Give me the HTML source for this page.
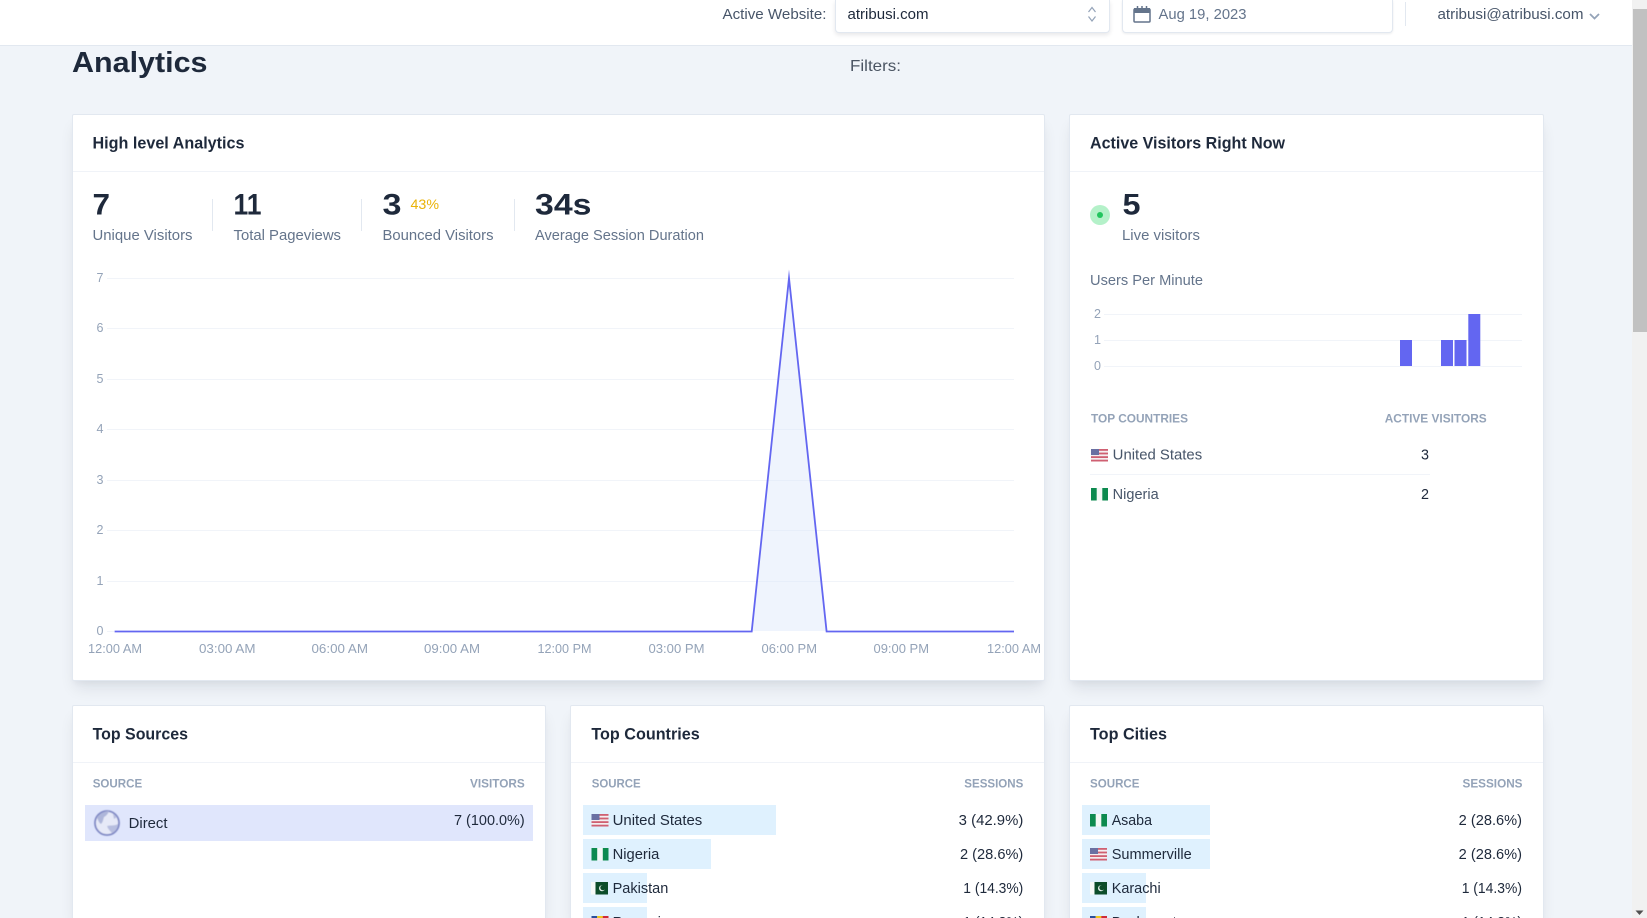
<!DOCTYPE html>
<html lang="en"><head><meta charset="utf-8"><title>Analytics</title>
<style>
html,body{margin:0;padding:0;width:1647px;height:918px;overflow:hidden;background:#f0f4f9}
body{position:relative;font-family:"Liberation Sans",sans-serif}
.hdr{position:absolute;left:0;top:0;width:1632px;height:45px;background:#fff;border-bottom:1px solid #e2e8f0}
.box{position:absolute;background:#fff;box-sizing:border-box}
.sel{top:0;height:32.5px;border:1px solid #e2e8f0;border-top:0;border-radius:0 0 4px 4px;box-shadow:0 2px 4px rgba(15,23,42,.1)}
.card{background:#fff;border:1px solid #e2e8f0;border-radius:2px;box-shadow:0 10px 15px -3px rgba(15,23,42,.09),0 4px 6px -2px rgba(15,23,42,.04)}
.open{border-bottom:0;border-radius:2px 2px 0 0}
.sb{position:absolute;left:1632px;top:0;width:15px;height:918px;background:#f1f1f1}
.th{position:absolute;left:1633px;top:9px;width:14px;height:323px;background:#c1c1c1}
svg{position:absolute;left:0;top:0}
text{font-family:"Liberation Sans",sans-serif}
.r{font-size:14.5px}
.b{font-size:16.5px;font-weight:700;fill:#1e293b}
.n{font-size:30px;font-weight:700;fill:#1e293b}
.g{fill:#64748b}
.h{font-size:12px;fill:#94a3b8;font-weight:700}
.t{font-size:12.5px;fill:#94a3b8}
.d{fill:#1e293b}
.m{fill:#475569}
.gl{stroke:#f1f4f9;stroke-width:1}
</style></head>
<body>
<div class="hdr"></div>
<div class="box sel" style="left:835px;width:274.5px"></div>
<div class="box sel" style="left:1122px;width:270.5px;box-shadow:0 1px 2px rgba(15,23,42,.08)"></div>
<div class="box card" style="left:72px;top:114px;width:973px;height:566.5px"></div>
<div class="box card" style="left:1069px;top:114px;width:474.5px;height:566.5px"></div>
<div class="box card open" style="left:72px;top:705px;width:473.5px;height:213px"></div>
<div class="box card open" style="left:570px;top:705px;width:474.5px;height:213px"></div>
<div class="box card open" style="left:1069px;top:705px;width:474.5px;height:213px"></div>
<div class="sb"></div><div class="th"></div>

<svg width="1647" height="918" viewBox="0 0 1647 918" xmlns="http://www.w3.org/2000/svg">
<defs>
<g id="us" filter="url(#fl)"><rect width="17" height="12.5" fill="#f4eef0"/><rect width="17" height="1.8" y="0" fill="#cf6072"/><rect width="17" height="1.8" y="3.6" fill="#cf6072"/><rect width="17" height="1.8" y="7.2" fill="#cf6072"/><rect width="17" height="1.8" y="10.7" fill="#cf6072"/><rect width="8" height="6" fill="#6a6fa2"/></g>
<g id="ng" filter="url(#fl)"><rect width="17" height="12.5" fill="#f4f8f5"/><rect width="5.7" height="12.5" fill="#0a8a50"/><rect x="11.3" width="5.7" height="12.5" fill="#0a8a50"/></g>
<g id="pk" filter="url(#fl)"><rect x="0" width="17" height="12.5" fill="#f8faf8"/><rect x="4.5" width="12.5" height="12.5" fill="#0b4d2a"/><circle cx="11" cy="6.2" r="3" fill="#e8f0ea"/><circle cx="11.9" cy="5.7" r="2.6" fill="#0b4d2a"/></g>
<g id="ro" filter="url(#fl)"><rect width="5.7" height="12.5" fill="#2a4f9c"/><rect x="5.7" width="5.7" height="12.5" fill="#f2c81e"/><rect x="11.3" width="5.7" height="12.5" fill="#ce2b37"/></g>
<filter id="fl" x="-10%" y="-10%" width="120%" height="120%"><feGaussianBlur stdDeviation=".3"/></filter>
<filter id="bl"><feGaussianBlur stdDeviation=".5"/></filter>
</defs>

<!-- top bar -->
<text x="722.5" y="19" class="r m" textLength="104" lengthAdjust="spacingAndGlyphs">Active Website:</text>
<text x="847.5" y="19" class="r d" textLength="81" lengthAdjust="spacingAndGlyphs">atribusi.com</text>
<path d="M1088.5 12l3.5-4.5 3.5 4.5M1088.5 16.5l3.5 4.5 3.5-4.5" fill="none" stroke="#94a3b8" stroke-width="1.2"/>
<path d="M1135 9h14a1 1 0 0 1 1 1v11a1 1 0 0 1-1 1h-14a1 1 0 0 1-1-1v-11a1 1 0 0 1 1-1z" fill="none" stroke="#64748b" stroke-width="1.5"/>
<path d="M1134 8h16v5h-16z" fill="#64748b"/>
<path d="M1137.5 6v3M1142 6v3M1146.5 6v3" stroke="#64748b" stroke-width="1.5"/>
<text x="1158.5" y="19" class="r g" textLength="88" lengthAdjust="spacingAndGlyphs">Aug 19, 2023</text>
<path d="M1405.5 2v24" stroke="#e2e8f0"/>
<text x="1437.5" y="19" class="r m" textLength="146" lengthAdjust="spacingAndGlyphs">atribusi@atribusi.com</text>
<path d="M1590 14l4.5 4.5 4.5-4.5" fill="none" stroke="#94a3b8" stroke-width="1.8"/>
<path d="M1635.5 910.5h8l-4 4.5z" fill="#505050"/>

<!-- page header -->
<text x="72" y="72" font-size="29" font-weight="700" fill="#1e293b" textLength="135.5" lengthAdjust="spacingAndGlyphs">Analytics</text>
<text x="850" y="71" font-size="16" fill="#4b5563" textLength="51" lengthAdjust="spacingAndGlyphs">Filters:</text>

<!-- high level card -->
<text x="92.5" y="148.6" class="b" textLength="152" lengthAdjust="spacingAndGlyphs">High level Analytics</text>
<path d="M73 171.5h971M1070 171.5h473M73 762.5h472M571 762.5h473M1070 762.5h473" stroke="#f0f3f8"/>
<text x="92.5" y="214.6" class="n" textLength="17.5" lengthAdjust="spacingAndGlyphs">7</text>
<text x="92.5" y="240" class="r g" textLength="100" lengthAdjust="spacingAndGlyphs">Unique Visitors</text>
<path d="M212.5 199v32M361.5 199v32M514.5 199v32" stroke="#e2e8f0"/>
<text x="233.5" y="214.6" class="n" textLength="28" lengthAdjust="spacingAndGlyphs">11</text>
<text x="233.5" y="240" class="r g" textLength="107.5" lengthAdjust="spacingAndGlyphs">Total Pageviews</text>
<text x="382.5" y="214.6" class="n" textLength="19" lengthAdjust="spacingAndGlyphs">3</text>
<text x="410.5" y="208.8" font-size="14" fill="#eab308" textLength="28.5" lengthAdjust="spacingAndGlyphs">43%</text>
<text x="382.5" y="240" class="r g" textLength="111" lengthAdjust="spacingAndGlyphs">Bounced Visitors</text>
<text x="535" y="214.6" class="n" textLength="56.5" lengthAdjust="spacingAndGlyphs">34s</text>
<text x="535" y="240" class="r g" textLength="169" lengthAdjust="spacingAndGlyphs">Average Session Duration</text>

<!-- area chart -->
<path class="gl" d="M107 278.5h907M107 328.5h907M107 379.5h907M107 429.5h907M107 480.5h907M107 530.5h907M107 581.5h907M107 631.5h7"/>
<g class="t" text-anchor="end">
<text x="103.5" y="282">7</text><text x="103.5" y="332">6</text><text x="103.5" y="383">5</text><text x="103.5" y="433">4</text><text x="103.5" y="484">3</text><text x="103.5" y="534">2</text><text x="103.5" y="585">1</text><text x="103.5" y="635">0</text>
</g>
<path d="M751.7 631 789 278 826.3 631z" fill="#dbe7fb" opacity=".45"/>
<path d="M114.6 631.5H751.7L789 278 826.6 631.5H1014" fill="none" stroke="#6366f1" stroke-width="1.8" stroke-miterlimit="20"/>
<g class="t">
<text x="88" y="653" textLength="54" lengthAdjust="spacingAndGlyphs">12:00 AM</text>
<text x="199" y="653" textLength="56.5" lengthAdjust="spacingAndGlyphs">03:00 AM</text>
<text x="311.5" y="653" textLength="56.5" lengthAdjust="spacingAndGlyphs">06:00 AM</text>
<text x="424" y="653" textLength="56" lengthAdjust="spacingAndGlyphs">09:00 AM</text>
<text x="537.5" y="653" textLength="54" lengthAdjust="spacingAndGlyphs">12:00 PM</text>
<text x="648.5" y="653" textLength="56" lengthAdjust="spacingAndGlyphs">03:00 PM</text>
<text x="761.5" y="653" textLength="55.5" lengthAdjust="spacingAndGlyphs">06:00 PM</text>
<text x="873.5" y="653" textLength="55.5" lengthAdjust="spacingAndGlyphs">09:00 PM</text>
<text x="987" y="653" textLength="54" lengthAdjust="spacingAndGlyphs">12:00 AM</text>
</g>

<!-- active visitors -->
<text x="1090" y="148.6" class="b" textLength="195" lengthAdjust="spacingAndGlyphs">Active Visitors Right Now</text>
<circle cx="1100" cy="215" r="10" fill="#b4f1c9"/><circle cx="1100" cy="215" r="3" fill="#22c55e"/>
<text x="1122.5" y="214.6" class="n" textLength="18" lengthAdjust="spacingAndGlyphs">5</text>
<text x="1122" y="240" class="r g" textLength="78" lengthAdjust="spacingAndGlyphs">Live visitors</text>
<text x="1090" y="285" class="r g" textLength="113" lengthAdjust="spacingAndGlyphs">Users Per Minute</text>
<path class="gl" d="M1104 314.5h418M1104 340.5h418M1104 366.5h418"/>
<g class="t" text-anchor="end"><text x="1101" y="318">2</text><text x="1101" y="344">1</text><text x="1101" y="370">0</text></g>
<path d="M1400 340h12v26h-12zM1441 340h12v26h-12zM1454.5 340h12v26h-12zM1468.3 314h12v52h-12z" fill="#6366f1"/>
<text x="1091" y="422.6" class="h" textLength="97" lengthAdjust="spacingAndGlyphs">TOP COUNTRIES</text>
<text x="1384.7" y="422.6" class="h" textLength="102" lengthAdjust="spacingAndGlyphs">ACTIVE VISITORS</text>
<use href="#us" x="1091" y="449"/>
<text x="1112.7" y="459.7" class="r m" textLength="89.5" lengthAdjust="spacingAndGlyphs">United States</text>
<text x="1421" y="459.7" class="r d" textLength="8" lengthAdjust="spacingAndGlyphs">3</text>
<path d="M1090 474.5h340" stroke="#f1f4f9"/>
<use href="#ng" x="1091" y="488"/>
<text x="1112.7" y="498.8" class="r m" textLength="46" lengthAdjust="spacingAndGlyphs">Nigeria</text>
<text x="1421" y="498.8" class="r d" textLength="8" lengthAdjust="spacingAndGlyphs">2</text>

<!-- top sources -->
<text x="92.6" y="739.6" class="b" textLength="95.4" lengthAdjust="spacingAndGlyphs">Top Sources</text>
<text x="92.7" y="787.4" class="h" textLength="49.5" lengthAdjust="spacingAndGlyphs">SOURCE</text>
<text x="470" y="787.4" class="h" textLength="54.7" lengthAdjust="spacingAndGlyphs">VISITORS</text>
<rect x="85" y="805" width="448" height="36" fill="#e0e6fc"/>
<g filter="url(#bl)">
<circle cx="107" cy="823" r="12" fill="#e6e9f7" stroke="#7f88c4" stroke-width="1.8"/>
<path d="M97 817c4-4 8-6 12-6-1 3-3 5-5 6-1 3-1 5-3 7-2-1-3-4-4-7z" fill="#aeb6da"/>
<path d="M107 826c4-1 8 0 11-2 0 4-2 7-6 9-2-2-4-4-5-7zM113 814l4 3-3 2z" fill="#b7bedf"/>
</g>
<text x="128.7" y="827.8" class="r d" textLength="38.8" lengthAdjust="spacingAndGlyphs">Direct</text>
<text x="454" y="824.8" class="r d" textLength="70.7" lengthAdjust="spacingAndGlyphs">7 (100.0%)</text>

<!-- top countries -->
<text x="591.4" y="739.6" class="b" textLength="108.3" lengthAdjust="spacingAndGlyphs">Top Countries</text>
<text x="591.7" y="787.4" class="h" textLength="49" lengthAdjust="spacingAndGlyphs">SOURCE</text>
<text x="964.3" y="787.4" class="h" textLength="59" lengthAdjust="spacingAndGlyphs">SESSIONS</text>
<g fill="#dff1fe">
<rect x="583" y="805" width="193" height="30"/><rect x="583" y="839" width="128" height="30"/><rect x="583" y="873" width="64" height="30"/><rect x="583" y="907" width="64" height="30"/>
</g>
<use href="#us" x="591.5" y="814"/><use href="#ng" x="591.5" y="848"/><use href="#pk" x="591" y="882"/><use href="#ro" x="591.5" y="916"/>
<g class="r d">
<text x="612.6" y="825" textLength="89.7" lengthAdjust="spacingAndGlyphs">United States</text>
<text x="612.6" y="858.8" textLength="46.7" lengthAdjust="spacingAndGlyphs">Nigeria</text>
<text x="612.6" y="893" textLength="55.7" lengthAdjust="spacingAndGlyphs">Pakistan</text>
<text x="612.6" y="927" textLength="56" lengthAdjust="spacingAndGlyphs">Romania</text>
<text x="958.7" y="825" textLength="64.6" lengthAdjust="spacingAndGlyphs">3 (42.9%)</text>
<text x="960" y="858.8" textLength="63.3" lengthAdjust="spacingAndGlyphs">2 (28.6%)</text>
<text x="963.3" y="893" textLength="60" lengthAdjust="spacingAndGlyphs">1 (14.3%)</text>
<text x="963.3" y="927" textLength="60" lengthAdjust="spacingAndGlyphs">1 (14.3%)</text>
</g>

<!-- top cities -->
<text x="1090" y="739.6" class="b" textLength="77" lengthAdjust="spacingAndGlyphs">Top Cities</text>
<text x="1090" y="787.4" class="h" textLength="49.5" lengthAdjust="spacingAndGlyphs">SOURCE</text>
<text x="1462.5" y="787.4" class="h" textLength="60" lengthAdjust="spacingAndGlyphs">SESSIONS</text>
<g fill="#dff1fe">
<rect x="1082" y="805" width="128" height="30"/><rect x="1082" y="839" width="128" height="30"/><rect x="1082" y="873" width="64" height="30"/><rect x="1082" y="907" width="64" height="30"/>
</g>
<use href="#ng" x="1090" y="814"/><use href="#us" x="1090" y="848"/><use href="#pk" x="1090" y="882"/><use href="#ro" x="1090" y="916"/>
<g class="r d">
<text x="1111.7" y="825" textLength="40.3" lengthAdjust="spacingAndGlyphs">Asaba</text>
<text x="1111.7" y="858.8" textLength="80" lengthAdjust="spacingAndGlyphs">Summerville</text>
<text x="1111.7" y="893" textLength="49" lengthAdjust="spacingAndGlyphs">Karachi</text>
<text x="1111.7" y="927" textLength="65" lengthAdjust="spacingAndGlyphs">Bucharest</text>
<text x="1458.7" y="825" textLength="63.3" lengthAdjust="spacingAndGlyphs">2 (28.6%)</text>
<text x="1458.7" y="858.8" textLength="63.3" lengthAdjust="spacingAndGlyphs">2 (28.6%)</text>
<text x="1461.7" y="893" textLength="60.3" lengthAdjust="spacingAndGlyphs">1 (14.3%)</text>
<text x="1461.7" y="927" textLength="60.3" lengthAdjust="spacingAndGlyphs">1 (14.3%)</text>
</g>
</svg>
</body></html>
